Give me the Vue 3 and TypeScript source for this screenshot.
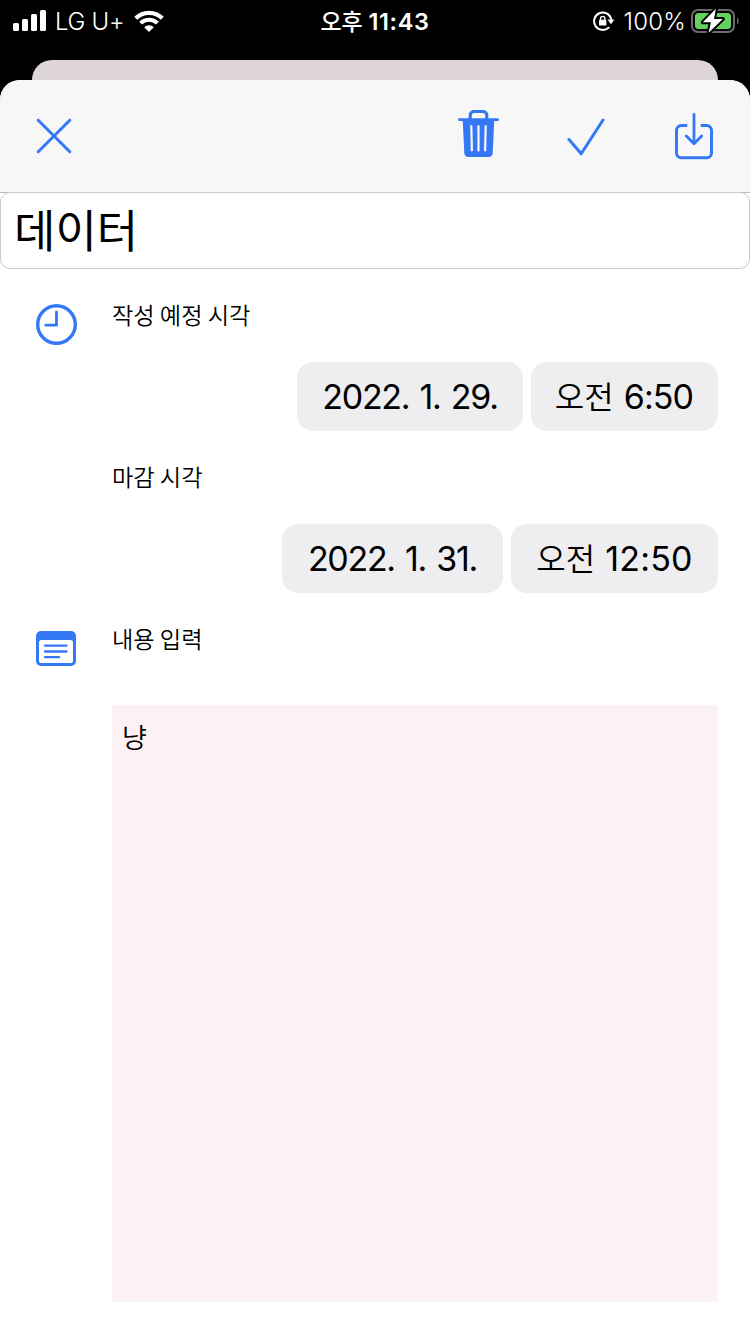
<script setup lang="ts">
interface Schedule {
  label: string
  date: string
  meridiem: string
  time: string
}

const title = '데이터'
const note = '냥'
const start: Schedule = { label: '작성 예정 시각', date: '2022. 1. 29.', meridiem: '오전', time: '6:50' }
const due: Schedule = { label: '마감 시각', date: '2022. 1. 31.', meridiem: '오전', time: '12:50' }
</script>

<template>
  <div class="screen">
    <div class="status">
      <div class="side">
        <svg class="signal" width="34" height="22" viewBox="0 0 34 22" fill="#fff">
          <rect x="0" y="13" width="6" height="8" rx="1.5" />
          <rect x="9" y="9" width="6" height="12" rx="1.5" />
          <rect x="18" y="4" width="6" height="17" rx="1.5" />
          <rect x="27" y="0" width="6" height="21" rx="1.5" />
        </svg>
        <span class="carrier">LG U+</span>
        <svg class="wifi" width="30" height="22" viewBox="0 0 30 22">
          <path d="M1.7 8.3a18.8 18.8 0 0 1 26.6 0" fill="none" stroke="#fff" stroke-width="4.2" />
          <path d="M6.6 13.1a11.9 11.9 0 0 1 16.8 0" fill="none" stroke="#fff" stroke-width="4" />
          <path d="M10.2 17.2a6.8 6.8 0 0 1 9.6 0L15 22z" fill="#fff" />
        </svg>
      </div>
      <div class="clock"><span class="clock-ko">오후</span><span>11:43</span></div>
      <div class="side right">
        <svg class="lock" width="22" height="20" viewBox="0 0 22 20">
          <path d="M15.6 16.7A8.7 8.7 0 1 1 18.2 8" fill="none" stroke="#fff" stroke-width="2" stroke-linecap="round" />
          <path d="M14.5 8.5h6.9L18 13.2z" fill="#fff" />
          <rect x="6" y="8.8" width="7.4" height="5.8" rx="1" fill="#fff" />
          <path d="M7.5 9V7.6a2.2 2.2 0 0 1 4.4 0V9" fill="none" stroke="#fff" stroke-width="1.4" />
        </svg>
        <span class="percent">100%</span>
        <svg class="battery" width="48" height="26" viewBox="0 0 48 26">
          <rect x="1" y="2" width="42" height="22" rx="6" fill="none" stroke="#6b6b6d" stroke-width="2" />
          <path d="M46 9.6c2.2 1 2.2 6 0 7z" fill="#6b6b6d" />
          <rect x="4" y="5" width="36" height="16" rx="3.5" fill="#65d160" />
          <path d="M24.9.8 11.8 14.3h8.1l-2.3 10.4L31.8 11H23z" fill="#fff" stroke="#000" stroke-width="4" stroke-linejoin="round" paint-order="stroke" />
        </svg>
      </div>
    </div>
    <div class="behind"></div>
    <main class="sheet">
      <header class="toolbar">
        <svg class="close" width="36" height="36" viewBox="0 0 36 36" fill="none" stroke="#3478f6" stroke-width="3" stroke-linecap="round">
          <path d="M2.2 2.2 33.8 33.8M33.8 2.2 2.2 33.8" />
        </svg>
        <svg class="trash" width="42" height="48" viewBox="0 0 42 48">
          <path d="M12.2 9V5.5a4 4 0 0 1 4-4h8.6a4 4 0 0 1 4 4V9" fill="none" stroke="#3478f6" stroke-width="3.2" />
          <path d="M1.5 9.7h38" stroke="#3478f6" stroke-width="2.8" stroke-linecap="round" />
          <path d="M4.7 10h31.6l-1.6 33a4.3 4.3 0 0 1-4.3 4H10.6a4.3 4.3 0 0 1-4.3-4z" fill="#3478f6" />
          <path d="M13.3 16.2 13.9 40.4M20.5 16.2v24.2M27.7 16.2 27.1 40.4" stroke="#f7f7f7" stroke-width="2.2" stroke-linecap="round" />
        </svg>
        <svg class="check" width="38" height="38" viewBox="0 0 38 38" fill="none" stroke="#3478f6" stroke-width="3" stroke-linecap="round" stroke-linejoin="round">
          <path d="M2 21.5 14.2 35.8 36 2" />
        </svg>
        <svg class="save" width="38" height="47" viewBox="0 0 38 47" fill="none" stroke="#3478f6" stroke-width="3" stroke-linecap="round" stroke-linejoin="round">
          <path d="M12.3 12.6H6.2a4.7 4.7 0 0 0-4.7 4.7V40a4.7 4.7 0 0 0 4.7 4.7h25.6a4.7 4.7 0 0 0 4.7-4.7V17.3a4.7 4.7 0 0 0-4.7-4.7h-6.1" stroke-linecap="butt" />
          <path d="M19 1.5v29M11.3 23l7.7 7.7 7.7-7.7" stroke-width="2.8" />
        </svg>
      </header>
      <div class="title-bar"><div class="title">{{ title }}</div></div>

      <section class="row first">
        <div class="gutter">
          <svg class="time-icon" width="42" height="42" viewBox="0 0 42 42" fill="none" stroke="#3478f6" stroke-linecap="round" stroke-linejoin="round">
            <circle cx="20.5" cy="20.5" r="18.8" stroke-width="3.4" />
            <path d="M20.5 8v13.2H9.7" stroke-width="2.8" />
          </svg>
        </div>
        <div class="content">
          <h2 class="label">{{ start.label }}</h2>
          <div class="pills">
            <div class="pill start-date">{{ start.date }}</div>
            <div class="pill start-time"><span class="ko">{{ start.meridiem }}</span><span>{{ start.time }}</span></div>
          </div>
        </div>
      </section>

      <section class="row">
        <div class="gutter"></div>
        <div class="content">
          <h2 class="label">{{ due.label }}</h2>
          <div class="pills">
            <div class="pill due-date">{{ due.date }}</div>
            <div class="pill due-time"><span class="ko">{{ due.meridiem }}</span><span>{{ due.time }}</span></div>
          </div>
        </div>
      </section>

      <section class="row">
        <div class="gutter">
          <svg class="note-icon" width="40" height="36" viewBox="0 0 40 36">
            <rect width="40" height="35" rx="5" fill="#3478f6" />
            <rect x="3" y="9" width="34" height="23" rx="2.6" fill="#fff" />
            <path d="M9 14.6h21.5M9 20.5h21.5M9 26.2h14" stroke="#3478f6" stroke-width="2.3" stroke-linecap="round" />
          </svg>
        </div>
        <div class="content">
          <h2 class="label">내용 입력</h2>
          <div class="note">{{ note }}</div>
        </div>
      </section>
    </main>
  </div>
</template>

<style>
body { background: #000; }
</style>

<style scoped>
.screen {
  width: 750px;
  height: 1334px;
  display: flex;
  flex-direction: column;
  overflow: hidden;
  background: #000;
  font-family: Inter, "Noto Sans CJK KR", sans-serif;
  white-space: nowrap;
  color: #000;
}
.screen * { box-sizing: border-box; }
svg { display: block; flex: none; }
.status {
  height: 60px;
  padding: 0 11px 20px 13px;
  display: grid;
  grid-template-columns: 1fr auto 1fr;
  align-items: center;
  color: #fff;
}
.side { display: flex; align-items: center; }
.right { justify-content: flex-end; }
.carrier { margin-left: 8px; padding-top: 2px; font-size: 24px; font-weight: 300; line-height: 40px; letter-spacing: -0.3px; }
.wifi { margin-left: 10px; }
.clock { display: flex; gap: 6px; margin-left: -2px; font-size: 23.5px; font-weight: 600; line-height: 40px; letter-spacing: 0.6px; padding-top: 1px; }
.clock-ko { margin-top: -2px; font-family: "Noto Sans CJK KR", sans-serif; font-weight: 500; font-size: 23px; letter-spacing: -0.2px; }
.percent { margin-left: 9px; padding-top: 2px; font-size: 24px; font-weight: 300; line-height: 40px; letter-spacing: 0.2px; }
.battery { margin-left: 5px; }
.behind { height: 20px; margin: 0 32px; border-radius: 20px 20px 0 0; background: #ded5d8; }
.sheet { height: 1254px; border-radius: 20px 20px 0 0; background: #fff; overflow: hidden; }
.toolbar {
  height: 112px;
  display: flex;
  align-items: center;
  padding: 0 37px 0 36px;
  background: #f7f7f7;
}
.trash { margin: -5px 0 0 auto; }
.check { margin-left: 67px; margin-top: 2px; }
.save { margin-left: 70px; }
.title-bar { background: linear-gradient(#b9b9b9 1px, #fff 1px); }
.title {
  height: 77px;
  padding-left: 13px;
  border: 1px solid #cacaca;
  border-radius: 10px;
  font: 400 45px/71px "Noto Sans CJK KR", sans-serif;
}
.row { display: flex; height: 162px; }
.first { margin-top: 27px; }
.gutter { width: 112px; padding-left: 36px; flex: none; }
.time-icon { margin-top: 8px; }
.note-icon { margin-top: 11px; }
.content { width: 606px; flex: none; }
.label { margin: 0; height: 66px; font: 350 23.2px/36px "Noto Sans CJK KR", sans-serif; }
.pills { display: flex; justify-content: flex-end; gap: 8px; }
.pill {
  height: 69px;
  display: flex;
  align-items: center;
  justify-content: center;
  gap: 10px;
  border-radius: 16px;
  background: #eeeef0;
  font-size: 34px;
  font-weight: 400;
  line-height: 68px;
}
.ko { margin-top: -4px; font-family: "Noto Sans CJK KR", sans-serif; font-size: 32px; font-weight: 350; letter-spacing: 0; }
.start-date, .due-date { letter-spacing: -1.3px; word-spacing: 2px; }
.start-date { width: 226px; }
.start-time { width: 187px; letter-spacing: -0.9px; padding-right: 1px; }
.due-date { width: 221px; }
.due-time { width: 207px; letter-spacing: 0.2px; }
.note {
  height: 597px;
  margin-top: 19px;
  padding: 12px 10px;
  background: #fcf1f5;
  font: 350 27px/40px "Noto Sans CJK KR", sans-serif;
}
</style>
